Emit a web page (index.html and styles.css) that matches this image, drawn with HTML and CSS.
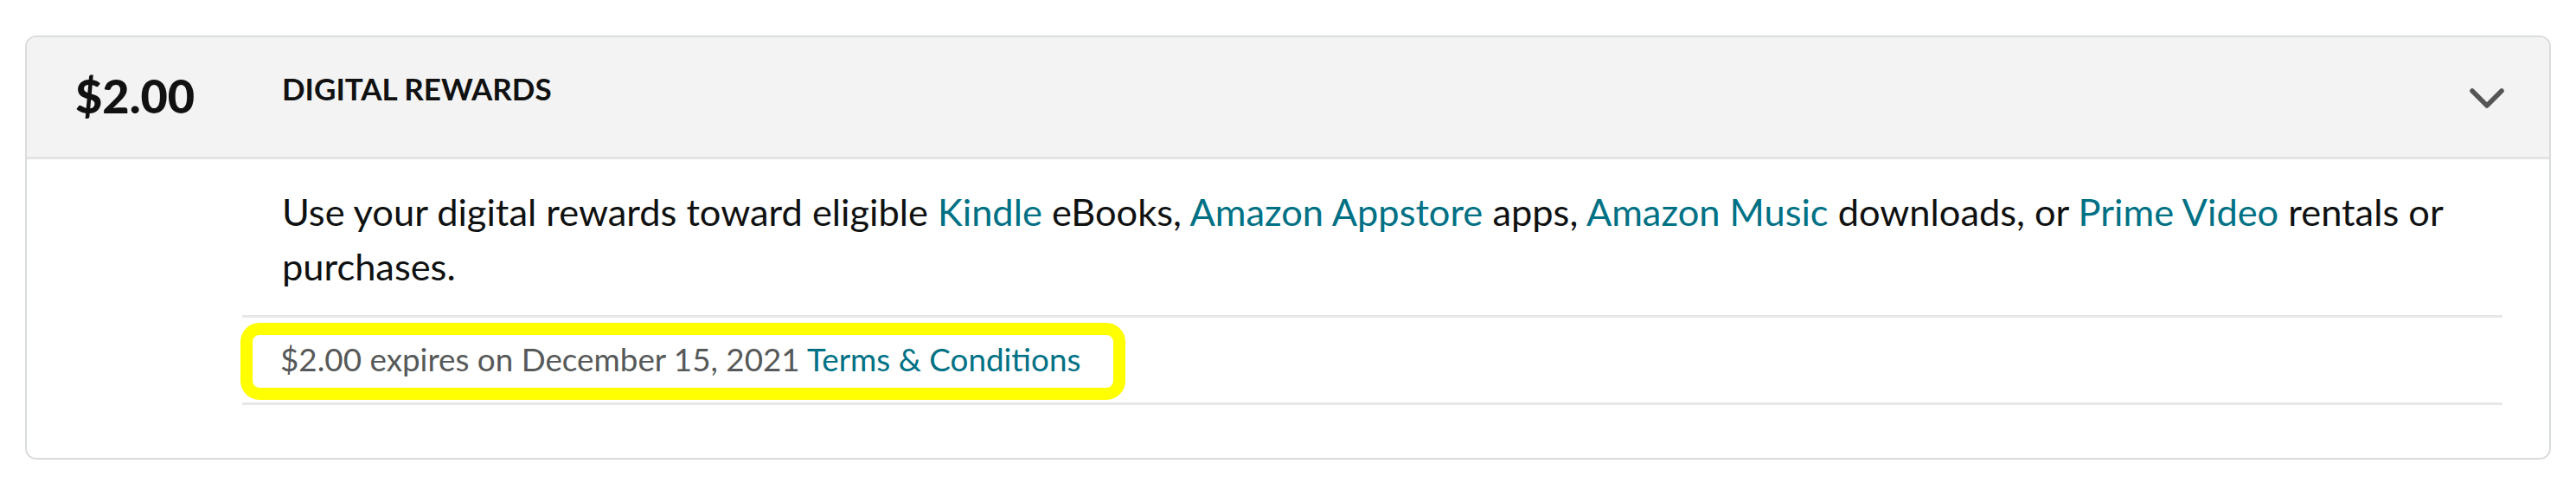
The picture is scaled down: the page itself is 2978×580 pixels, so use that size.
FILE: index.html
```html
<!DOCTYPE html>
<html lang="en">
<head>
<meta charset="utf-8">
<title>Digital Rewards</title>
<link rel="stylesheet" href="styles.css">
</head>
<body>
  <section class="card">
    <header class="card-head">
      <div class="amount">$2.00</div>
      <div class="title">DIGITAL REWARDS</div>
      <svg class="chevron" viewBox="0 0 40 23" width="40" height="23" aria-hidden="true">
        <polyline points="3,3 20,20 37,3" fill="none" stroke="#555555" stroke-width="5.5" stroke-linecap="round" stroke-linejoin="round"/>
      </svg>
    </header>
    <div class="card-body">
      <p class="desc">Use your digital rewards toward eligible <a href="#">Kindle</a> eBooks, <a href="#">Amazon Appstore</a> apps, <a href="#">Amazon Music</a> downloads, or <a href="#">Prime Video</a> rentals or purchases.</p>
      <div class="expiry-row">
        <span class="highlight">$2.00 expires on December 15, 2021 <a href="#">Terms &amp; Conditions</a></span>
      </div>
    </div>
  </section>
</body>
</html>
```
FILE: styles.css
```css
* { box-sizing: border-box; }

html, body {
  margin: 0;
  background: #ffffff;
}

body {
  padding: 41px 29px 0;
  font-family: Lato, "Liberation Sans", Arial, sans-serif;
  color: #0f1111;
}

a {
  color: #007185;
  text-decoration: none;
}

.card {
  border: 2px solid #d9dcdc;
  border-radius: 13px;
  overflow: hidden;
  background: #ffffff;
  height: 490px;
}

.card-head {
  display: flex;
  align-items: flex-start;
  height: 141px;
  padding: 41px 52px 0 56px;
  background: #f3f3f3;
  border-bottom: 3px solid #e3e3e3;
}

.amount {
  width: 239px;
  margin-top: 0;
  font-size: 54px;
  line-height: 54px;
  font-weight: 900;
  color: #111111;
}

.title {
  flex: 1;
  font-size: 35px;
  line-height: 36px;
  font-weight: 700;
  color: #111111;
}

.chevron {
  display: block;
  margin-top: 18px;
}

.card-body {
  padding: 29px 54px 0 249px;
}

.desc {
  margin: 0;
  padding: 0 10px 25px 46px;
  font-size: 43.4px;
  line-height: 63px;
  border-bottom: 3px solid #e7e7e7;
}

.expiry-row {
  padding: 6px 0 3px;
  border-bottom: 3px solid #e7e7e7;
}

.highlight {
  display: inline-block;
  margin-left: -2px;
  padding: 0 38px 4px 32px;
  border: 14px solid #ffff00;
  border-radius: 22px;
  font-size: 36.8px;
  line-height: 57px;
  color: #565959;
}
```
